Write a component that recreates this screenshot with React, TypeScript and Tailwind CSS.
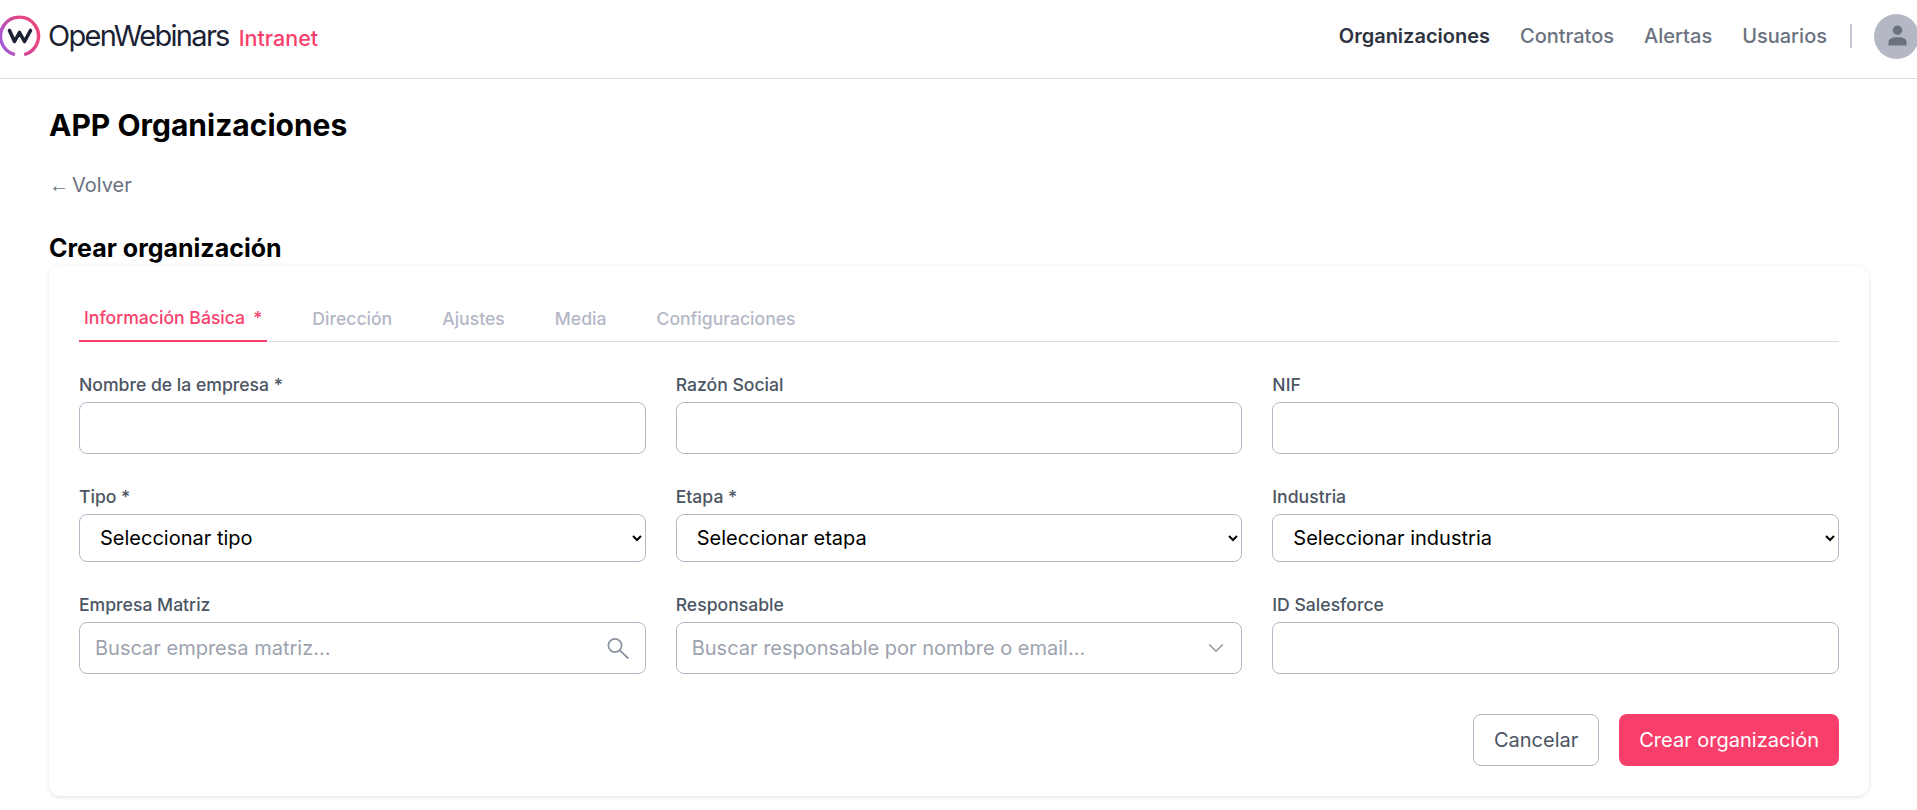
import { ChevronDown } from 'lucide-react';

const tabs = ['Dirección', 'Ajustes', 'Media', 'Configuraciones'];

function Logo() {
  return (
    <svg className="h-[44px] w-[44px] -ml-[2px] shrink-0" viewBox="0 0 44 44" fill="none">
      <defs>
        <linearGradient id="ring" x1="0" y1="30" x2="42" y2="12" gradientUnits="userSpaceOnUse">
          <stop offset="0" stopColor="#9d5be0" />
          <stop offset="0.55" stopColor="#d9468f" />
          <stop offset="1" stopColor="#f0447a" />
        </linearGradient>
      </defs>
      <path d="M15.5 40.2A19 19 0 1 1 27.5 40.2" stroke="url(#ring)" strokeWidth="3.4" strokeLinecap="round" />
      <path d="M11.5 16.5L16.5 27.5L21.5 18.5L26.5 27.5L32.5 16.5" stroke="#1a2233" strokeWidth="3.6" strokeLinecap="round" strokeLinejoin="round" />
    </svg>
  );
}

function SearchIcon() {
  return (
    <svg className="h-[22px] w-[22px] text-[#8b93a3]" viewBox="0 0 22 22" fill="none" stroke="currentColor" strokeWidth="1.8" strokeLinecap="round">
      <circle cx="8" cy="8.5" r="6.6" />
      <path d="M12.9 13.4L20.8 21" />
    </svg>
  );
}

function Field({ label, children }: { label: string; children?: React.ReactNode }) {
  return (
    <div className="flex flex-col gap-[5px]">
      <label className="text-[17.6px] leading-6 font-medium text-[#4b5563]">{label}</label>
      {children ?? <input className="h-[52px] w-full rounded-lg border border-[#b4b7c6] bg-white px-4 text-xl outline-none" />}
    </div>
  );
}

function Dropdown({ placeholder }: { placeholder: string }) {
  return (
    <select className="h-[48px] w-full rounded-lg border border-[#b4b7c6] bg-white pl-[16px] pr-1 text-xl text-black outline-none">
      <option>{placeholder}</option>
    </select>
  );
}

export default function App() {
  return (
    <div className="min-h-[810px] overflow-hidden bg-white font-['Inter',sans-serif]">
      <header className="flex h-[79px] items-center justify-between border-b border-[#dcdcdc] pb-[6px]">
        <div className="flex items-center">
          <Logo />
          <span className="ml-[6px] text-[29px] font-normal tracking-[-0.058em] text-[#1a2233]">OpenWebinars</span>
          <span className="ml-[10px] mt-[4px] text-[21.5px] font-medium text-[#f83f6b]">Intranet</span>
        </div>
        <div className="-mr-[2px] flex items-center">
          <nav className="flex items-center gap-[30px] text-xl font-medium text-[#6b7280]">
            <a className="font-semibold text-[#2d3340]">Organizaciones</a>
            <a>Contratos</a>
            <a>Alertas</a>
            <a>Usuarios</a>
          </nav>
          <div className="ml-[23px] mr-[22px] h-[24px] w-[2px] bg-[#c3cad6]" />
          <div className="flex h-[45px] w-[45px] items-center justify-center rounded-full bg-[#b4b8c4]">
            <svg className="h-[24px] w-[24px] text-[#6b7280]" viewBox="0 0 24 24" fill="currentColor">
              <circle cx="12.5" cy="6.2" r="4.7" />
              <path d="M3.5 21.5v-3.3c0-3.2 3-5 9-5s9 1.8 9 5v3.3z" />
            </svg>
          </div>
        </div>
      </header>

      <main className="pl-[49px] pr-[48px] pt-[28px]">
        <h1 className="text-3xl leading-9 font-bold text-black">APP Organizaciones</h1>
        <a className="mt-[28px] flex items-center text-xl leading-7 text-[#6b7280]">
          <span className="mr-[3px] font-['Liberation_Sans'] text-[20px]">←</span>Volver
        </a>
        <h2 className="mt-[33px] mb-[2px] text-[25px] leading-8 font-bold text-black">Crear organización</h2>

        <section className="rounded-xl bg-white px-[30px] pt-[29px] pb-[30px] shadow-[0_1px_4px_rgba(0,0,0,0.12)]">
          <div className="flex gap-10 border-b border-[#d9dbe3] pt-[11px]">
            <button className="-mb-px flex border-b-2 border-[#f83f6b] px-[5px] pb-[10px] text-[17.6px] leading-6 font-medium text-[#f83f6b]">
              Información Básica <span className="ml-2">*</span>
            </button>
            {tabs.map((tab) => (
              <button key={tab} className="px-[5px] pb-[10px] text-[17.6px] leading-6 font-medium text-[#b4b7c6]">
                {tab}
              </button>
            ))}
          </div>

          <div className="mt-[31px] grid grid-cols-3 gap-x-[30px] gap-y-[31px]">
            <Field label="Nombre de la empresa *" />
            <Field label="Razón Social" />
            <Field label="NIF" />
            <Field label="Tipo *">
              <Dropdown placeholder="Seleccionar tipo" />
            </Field>
            <Field label="Etapa *">
              <Dropdown placeholder="Seleccionar etapa" />
            </Field>
            <Field label="Industria">
              <Dropdown placeholder="Seleccionar industria" />
            </Field>
            <Field label="Empresa Matriz">
              <div className="flex h-[52px] items-center rounded-lg border border-[#b4b7c6] bg-white pl-[15px] pr-[16px]">
                <input
                  placeholder="Buscar empresa matriz..."
                  className="min-w-0 flex-1 text-xl outline-none placeholder:text-[#9ca3af]"
                />
                <SearchIcon />
              </div>
            </Field>
            <Field label="Responsable">
              <div className="flex h-[52px] items-center rounded-lg border border-[#b4b7c6] bg-white pl-[15px] pr-[12px]">
                <input
                  placeholder="Buscar responsable por nombre o email..."
                  className="min-w-0 flex-1 text-xl outline-none placeholder:text-[#9ca3af]"
                />
                <ChevronDown className="h-[26px] w-[26px] text-[#8b93a3]" strokeWidth={1.25} />
              </div>
            </Field>
            <Field label="ID Salesforce" />
          </div>

          <div className="mt-10 flex justify-end gap-5">
            <button className="h-[52px] rounded-lg border border-[#b4b7c6] bg-white px-5 text-xl text-[#4b5563]">Cancelar</button>
            <button className="h-[52px] rounded-lg bg-[#f83f6b] px-5 text-xl text-white">Crear organización</button>
          </div>
        </section>
      </main>
    </div>
  );
}
